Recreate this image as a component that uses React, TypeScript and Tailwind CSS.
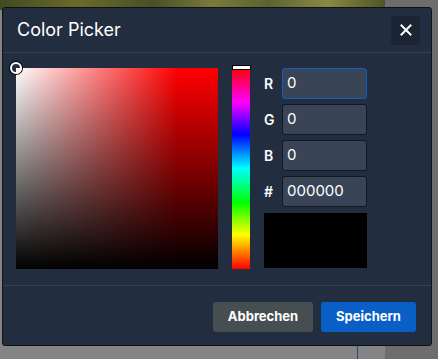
import React from "react";

export default function App() {
  const font = { fontFamily: "Inter, 'Liberation Sans', sans-serif" };
  return (
    <div className="relative w-[438px] h-[359px] overflow-hidden bg-[#848484]" style={font}>
      {/* background behind modal */}
      <div className="absolute left-0 top-0 w-[385px] h-[10px] bg-[linear-gradient(90deg,#3f4a22,#6b6a2a_20%,#48502a_40%,#7a7b3a_55%,#5a6330_70%,#8a8a44_85%,#4d5528)]" />
      <div className="absolute left-[385px] top-0 w-[53px] h-[359px] bg-[#6d6d6d]" />
      <div className="absolute left-[357px] top-[340px] w-[1px] h-[19px] bg-[#1f4f8f]" />

      {/* modal */}
      <div className="absolute left-[2px] top-[7px] w-[430px] h-[339px] bg-[#222d3f] border border-[#111] rounded-[3px] flex flex-col text-white">
        <div className="h-[45px] flex items-center justify-between pl-[14px] pr-[11px] border-b border-[#34405a]">
          <span className="text-[18px] leading-none">Color Picker</span>
          <button className="w-[29px] h-[29px] rounded-[3px] bg-[#1c2534] flex items-center justify-center">
            <svg width="12" height="12" viewBox="0 0 12 12">
              <path d="M1.5 1.5 L10.5 10.5 M10.5 1.5 L1.5 10.5" stroke="white" strokeWidth="2" strokeLinecap="square" />
            </svg>
          </button>
        </div>

        <div className="flex pl-[13px] pt-[15px] h-[233px] border-b border-[#34405a]">
          <div className="relative w-[202px] h-[201px] bg-[#ff0000]">
            <div className="absolute inset-0 bg-[linear-gradient(to_right,#fff,rgba(255,255,255,0)_80%)]" />
            <div className="absolute inset-0 bg-[linear-gradient(to_bottom,rgba(0,0,0,0),#000)]" />
            <div className="absolute -left-[6px] -top-[6px] w-[12px] h-[12px] rounded-full border-2 border-white shadow-[0_0_0_1px_#000]" />
          </div>
          <div className="relative ml-[14px] w-[18px] h-[201px] bg-[linear-gradient(to_bottom,#f00,#f0f_17%,#00f_33%,#0ff_50%,#0f0_67%,#ff0_83%,#f00)]">
            <div className="absolute left-0 -top-[3px] w-[19px] h-[5px] bg-white border border-black" />
          </div>
          <div className="ml-[14px] w-[103px] flex flex-col">
            {[
              ["R", "0", true],
              ["G", "0", false],
              ["B", "0", false],
              ["#", "000000", false],
            ].map(([l, v, f], i) => (
              <div key={i} className={`flex items-center h-[31px] ${i === 3 ? "mb-[6px]" : "mb-[5px]"}`}>
                <span className="w-[18px] text-[14px] font-semibold">{l as string}</span>
                <div
                  className={`w-[85px] h-[31px] rounded-[3px] bg-[#394456] flex items-center pl-[4px] text-[15px] ${
                    f ? "border border-[#0b5fc5]" : "border border-[#121820]"
                  }`}
                >
                  {v as string}
                </div>
              </div>
            ))}
            <div className="w-[103px] h-[55px] bg-black" />
          </div>
        </div>

        <div className="flex-1 flex items-center justify-end gap-[8px] pr-[15px] pt-[2px]">
          <button className="w-[100px] h-[30px] rounded-[3px] bg-[#474e52] text-[13px] font-bold">Abbrechen</button>
          <button className="w-[95px] h-[30px] rounded-[3px] bg-[#0a5fc6] text-[13px] font-bold">Speichern</button>
        </div>
      </div>
    </div>
  );
}
